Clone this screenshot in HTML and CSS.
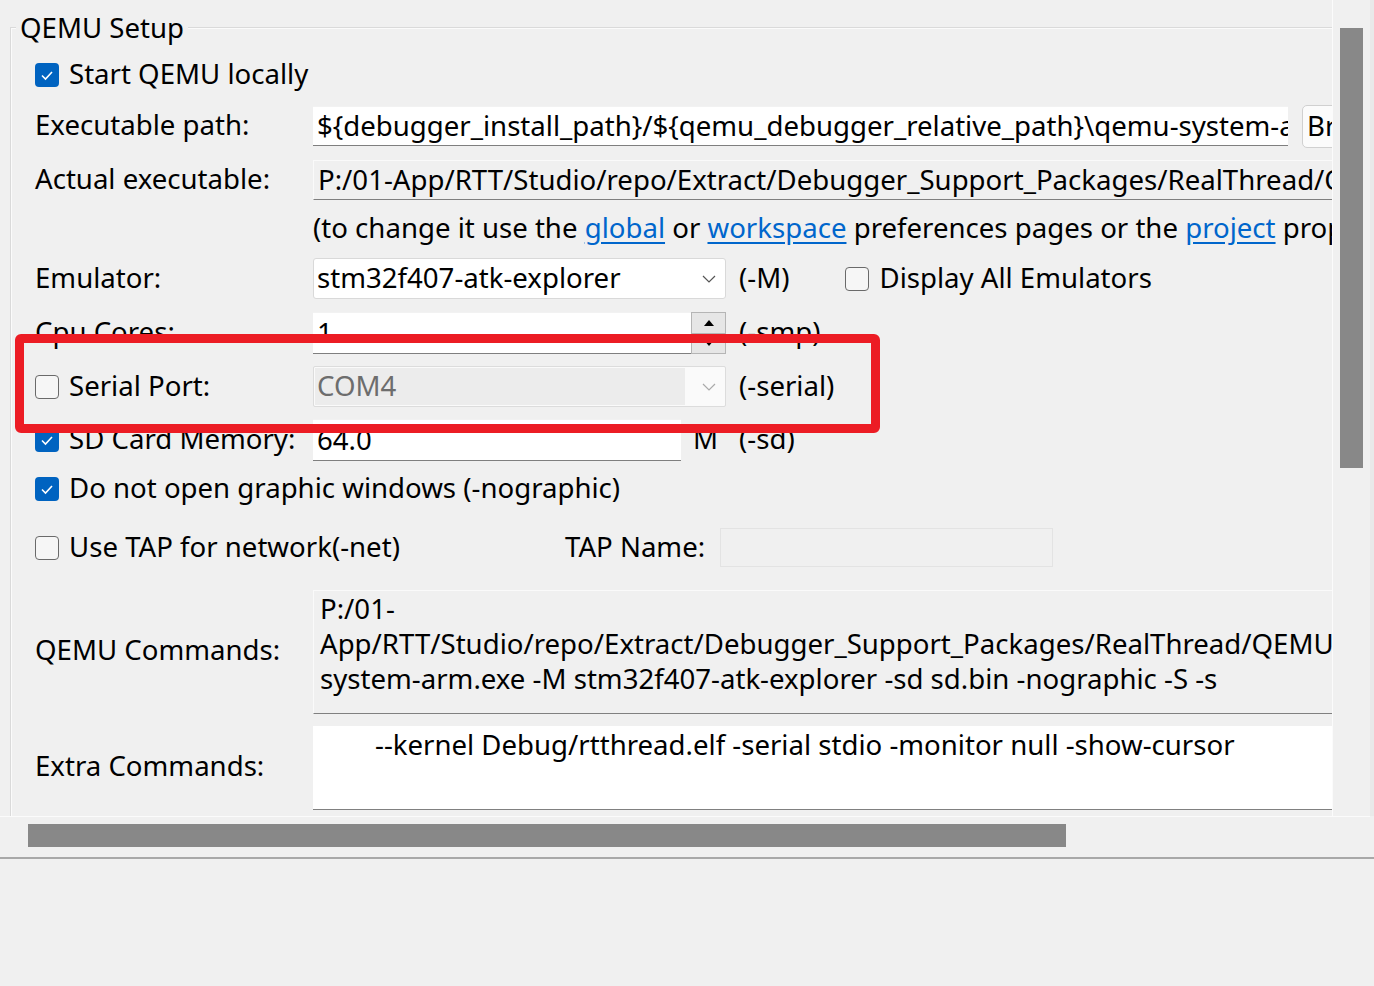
FILE: index.html
```html
<!DOCTYPE html>
<html>
<head>
<meta charset="utf-8">
<link rel="stylesheet" href="styles.css">
</head>
<body>
<div class="window">
  <div class="scrollarea">
    <div class="viewport">
      <div class="group">
        <div class="legend">QEMU Setup</div>
        <div class="rows">
          <div class="row r-start">
            <span class="cb checked"><svg viewBox="0 0 24 24"><polyline points="7,12.5 10.5,16 17,9" /></svg></span>
            <span class="cb-label">Start QEMU locally</span>
          </div>
          <div class="row r-exec">
            <span class="label">Executable path:</span>
            <div class="field white exec">${debugger_install_path}/${qemu_debugger_relative_path}\qemu-system-arm.exe</div>
            <div class="button">Browse...</div>
          </div>
          <div class="row r-actual">
            <span class="label">Actual executable:</span>
            <div class="field readonly wide">P:/01-App/RTT/Studio/repo/Extract/Debugger_Support_Packages/RealThread/QEMU/4.2.0.4/qemu-system-arm.exe</div>
          </div>
          <div class="row r-link">
            <span class="label"></span>
            <span class="note">(to change it use the <a href="#">global</a> or <a href="#">workspace</a> preferences pages or the <a href="#">project</a> properties page)</span>
          </div>
          <div class="row r-emu">
            <span class="label">Emulator:</span>
            <div class="combo">
              <span class="combo-text">stm32f407-atk-explorer</span>
              <svg class="chev" viewBox="0 0 14 8"><polyline points="1,1 7,7 13,1" /></svg>
            </div>
            <span class="opt">(-M)</span>
            <span class="cb unchecked emu-cb"></span>
            <span class="cb-label">Display All Emulators</span>
          </div>
          <div class="row r-cpu">
            <span class="label">Cpu Cores:</span>
            <div class="field white spin-field">1</div>
            <div class="spin">
              <div class="spin-btn"><svg viewBox="0 0 12 8"><polygon points="6,1 11,7 1,7" /></svg></div>
              <div class="spin-btn"><svg viewBox="0 0 12 8"><polygon points="1,1 11,1 6,7" /></svg></div>
            </div>
            <span class="opt">(-smp)</span>
          </div>
          <div class="row r-serial">
            <span class="cb unchecked"></span>
            <span class="cb-label label-short">Serial Port:</span>
            <div class="combo disabled">
              <span class="combo-text">COM4</span>
              <svg class="chev" viewBox="0 0 14 8"><polyline points="1,1 7,7 13,1" /></svg>
            </div>
            <span class="opt">(-serial)</span>
          </div>
          <div class="row r-sd">
            <span class="cb checked"><svg viewBox="0 0 24 24"><polyline points="7,12.5 10.5,16 17,9" /></svg></span>
            <span class="cb-label label-short">SD Card Memory:</span>
            <div class="field white sd-field">64.0</div>
            <span class="unit">M</span>
            <span class="opt">(-sd)</span>
          </div>
          <div class="row r-nog">
            <span class="cb checked"><svg viewBox="0 0 24 24"><polyline points="7,12.5 10.5,16 17,9" /></svg></span>
            <span class="cb-label">Do not open graphic windows (-nographic)</span>
          </div>
          <div class="row r-tap">
            <span class="cb unchecked"></span>
            <span class="cb-label tap-label">Use TAP for network(-net)</span>
            <span class="tap-name">TAP Name:</span>
            <div class="tapbox"></div>
          </div>
          <div class="row r-cmd">
            <span class="label">QEMU Commands:</span>
            <div class="area readonly-area">P:/01-<br>App/RTT/Studio/repo/Extract/Debugger_Support_Packages/RealThread/QEMU/4.2.0.4/qemu-<br>system-arm.exe -M stm32f407-atk-explorer -sd sd.bin -nographic -S -s</div>
          </div>
          <div class="row r-extra">
            <span class="label">Extra Commands:</span>
            <div class="area white-area"><span class="indent">--kernel Debug/rtthread.elf -serial stdio -monitor null -show-cursor</span></div>
          </div>
        </div>
      </div>
    </div>
    <div class="vscroll"><div class="vthumb"></div></div>
  </div>
  <div class="hscroll"><div class="hthumb"></div></div>
  <div class="footer"></div>
  <div class="highlight"></div>
</div>
</body>
</html>
```
FILE: styles.css
```css
* { box-sizing: border-box; }
html, body {
  margin: 0;
  padding: 0;
  background: #f0f0f0;
  width: 1374px;
  height: 986px;
  overflow: hidden;
}
body {
  font-family: "Noto Sans", "Open Sans", sans-serif;
  font-size: 27.6px;
  color: #000;
}
.window {
  position: relative;
  width: 1374px;
  height: 986px;
}
.scrollarea {
  display: flex;
  height: 816px;
}
.viewport {
  width: 1333px;
  height: 816px;
  overflow: hidden;
  border-right: 1px solid #fbfbfb;
  padding: 27px 0 0 10px;
}
.group {
  position: relative;
  border-top: 1px solid #dadada;
  border-left: 1px solid #dadada;
  box-shadow: inset 1px 1px 0 #fbfbfb;
  height: 800px;
  width: 1400px;
}
.legend {
  position: absolute;
  left: 5px;
  top: -20px;
  padding: 0 4px;
  background: #f0f0f0;
  line-height: 38px;
  white-space: nowrap;
}
.rows {
  display: flex;
  flex-direction: column;
  padding-left: 24px;
}
.row {
  display: flex;
  align-items: center;
  white-space: nowrap;
  flex: none;
}
.label, .cb-label, .opt, .unit, .tap-name, .note {
  padding-bottom: 4px;
}
.label {
  width: 278px;
  flex: none;
}
.label-short { width: 244px; flex: none; }
.r-start { margin-top: 33px; height: 28px; }
.r-exec { margin-top: 17px; height: 40px; }
.r-actual { margin-top: 14px; height: 40px; }
.r-link { margin-top: 9px; height: 40px; }
.r-emu { margin-top: 9px; height: 41px; }
.r-cpu { margin-top: 13px; height: 42px; }
.r-serial { margin-top: 12px; height: 41px; }
.r-sd { margin-top: 12px; height: 42px; }
.r-nog { margin-top: 8px; height: 40px; }
.r-tap { margin-top: 19px; height: 39px; }
.r-cmd { margin-top: 23px; height: 124px; }
.r-cmd .label { padding-bottom: 6px; }
.r-extra { margin-top: 12px; height: 84px; }
.r-extra .label { padding-bottom: 6px; }

.cb {
  width: 24px;
  height: 24px;
  border-radius: 4px;
  flex: none;
  display: flex;
  align-items: center;
  justify-content: center;
}
.cb.checked { background: #0063c0; }
.cb.checked svg { width: 24px; height: 24px; }
.cb.checked polyline { fill: none; stroke: #fff; stroke-width: 1.6; }
.cb.unchecked {
  border: 1.5px solid #6a6a6a;
  background: #f6f6f6;
}
.cb-label { margin-left: 10px; }

.field {
  height: 100%;
  padding: 0 4px 3px 4px;
  display: flex;
  align-items: center;
  overflow: hidden;
  border-bottom: 1px solid #7f7f7f;
}
.field.white {
  background: #fff;
  border-top: 1px solid #f2f2f2;
}
.field.exec { width: 975px; flex: none; }
.field.readonly {
  background: #f0f0f0;
  border-top: 1px solid #fafafa;
  border-left: 1px solid #fafafa;
}
.field.wide { width: 1100px; flex: none; }
.button {
  margin-left: 14px;
  height: 43px;
  width: 100px;
  flex: none;
  border: 1px solid #d0d0d0;
  border-radius: 5px;
  background: #fbfbfb;
  display: flex;
  align-items: center;
  padding: 0 0 3px 4px;
}
.note a { color: #0066cc; text-decoration: underline; text-underline-offset: 4px; }

.combo {
  width: 413px;
  height: 100%;
  flex: none;
  background: #fff;
  border: 1px solid #d9d9d9;
  border-radius: 3px;
  display: flex;
  align-items: center;
  justify-content: space-between;
  padding: 0 9px 0 3px;
}
.combo-text { padding-bottom: 3px; }
.combo.disabled {
  background: #fafafa;
  border-color: #dcdcdc;
  border-radius: 2px;
  padding: 1px 9px 1px 1px;
}
.combo.disabled .combo-text {
  background: #ececec;
  color: #6d6d6d;
  width: 370px;
  height: 100%;
  display: flex;
  align-items: center;
  padding: 0 0 3px 2px;
}
.chev { width: 14px; height: 8px; }
.chev polyline { fill: none; stroke: #555; stroke-width: 1.2; }
.combo.disabled .chev polyline { stroke: #aaa; }
.opt { margin-left: 13px; }
.emu-cb { margin-left: 56px; }

.spin-field { width: 378px; flex: none; }
.spin {
  width: 35px;
  height: 100%;
  flex: none;
  display: flex;
  flex-direction: column;
  border: 1px solid #b5b5b5;
  background: #e6e6e6;
}
.spin-btn {
  flex: 1;
  display: flex;
  align-items: center;
  justify-content: center;
  border-bottom: 1px solid #b5b5b5;
}
.spin-btn:last-child { border-bottom: none; }
.spin-btn svg { width: 12px; height: 8px; }
.spin-btn polygon { fill: #000; }

.sd-field { width: 368px; flex: none; }
.unit { margin-left: 12px; }
.r-sd .opt { margin-left: 21px; }

.tap-label { width: 496px; flex: none; }
.tap-name { width: 155px; flex: none; }
.tapbox {
  width: 333px;
  height: 100%;
  border: 1px solid #e3e3e3;
  background: #f0f0f0;
}

.area {
  width: 1100px;
  height: 100%;
  flex: none;
  border-bottom: 1px solid #808080;
  line-height: 35px;
}
.readonly-area {
  background: #f0f0f0;
  border-top: 1px solid #fafafa;
  border-left: 1px solid #fafafa;
  padding: 0 0 0 6px;
}
.white-area {
  background: #fff;
  padding: 1px 0 0 6px;
}
.indent { padding-left: 56px; }

.vscroll {
  width: 41px;
  height: 816px;
  flex: none;
  background: #f0f0f0;
  padding: 28px 0 0 7px;
  border-right: 4px solid #e9e9e9;
}
.vthumb {
  width: 23px;
  height: 440px;
  background: #888;
}
.hscroll {
  height: 38px;
  border-top: 1px solid #fbfbfb;
  padding: 7px 0 0 28px;
  width: 1370px;
}
.hthumb {
  width: 1038px;
  height: 23px;
  background: #888;
}
.footer {
  margin-top: 3px;
  border-top: 2px solid #a8a8a8;
  height: 128px;
}
.highlight {
  position: absolute;
  left: 15px;
  top: 334px;
  width: 865px;
  height: 99px;
  border: 9px solid #ec1c24;
  border-radius: 6px;
}
```
